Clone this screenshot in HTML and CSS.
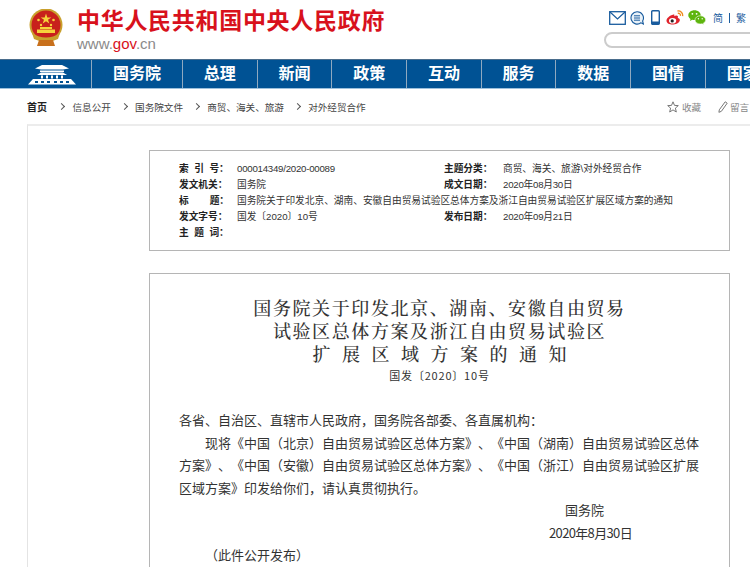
FILE: index.html
```html
<!DOCTYPE html>
<html lang="zh-CN">
<head>
  <meta charset="UTF-8">
  <title>国务院关于印发北京、湖南、安徽自由贸易试验区总体方案及浙江自由贸易试验区扩展区域方案的通知</title>
  <link rel="stylesheet" href="styles.css">
</head>
<body>
<div class="page">

  <header class="top">
    <svg class="emblem" viewBox="0 0 36 38">
      <circle cx="18" cy="16" r="16.5" fill="#c9a02c"/>
      <circle cx="18" cy="16" r="14.5" fill="#c8201c"/>
      <polygon points="18,4.5 19.3,8.4 23.3,8.4 20,10.8 21.3,14.6 18,12.3 14.7,14.6 16,10.8 12.7,8.4 16.7,8.4" fill="#f6d23c"/>
      <circle cx="10.5" cy="11" r="1.3" fill="#f6d23c"/>
      <circle cx="25.5" cy="11" r="1.3" fill="#f6d23c"/>
      <circle cx="13" cy="16" r="1.2" fill="#f6d23c"/>
      <circle cx="23" cy="16" r="1.2" fill="#f6d23c"/>
      <rect x="12" y="18" width="12" height="2" fill="#f6d23c"/>
      <rect x="9" y="20.5" width="18" height="3.5" fill="#f6d23c"/>
      <path d="M4 24 Q18 33 32 24 L30 30 Q18 36 6 30 Z" fill="#c9a02c"/>
      <path d="M11 31 H25 L27 37 H9 Z" fill="#c8701c"/>
    </svg>
    <div class="site-name">
      <div class="site-title">中华人民共和国中央人民政府</div>
      <div class="site-url">www.<span class="url-red">gov</span>.cn</div>
    </div>
    <div class="tools">
      <div class="tool-icons">
        <svg class="icon-mail" viewBox="0 0 17 14"><rect x="0.7" y="0.7" width="15.6" height="12.6" fill="none" stroke="#1a5c9e" stroke-width="1.3"/><path d="M1 1 L8.5 8 L16 1" fill="none" stroke="#1a5c9e" stroke-width="1.2"/></svg>
        <svg class="icon-chat" viewBox="0 0 14 14"><path d="M7 0.7 A6.2 6.2 0 1 0 11 11.8 L13.4 13 L12.6 10 A6.2 6.2 0 0 0 7 0.7 Z" fill="#e8f1f8" stroke="#1a5c9e" stroke-width="1.1"/><path d="M4 4.8 H10 M4 7 H10 M4 9.2 H10" stroke="#1a5c9e" stroke-width="1"/></svg>
        <svg class="icon-phone" viewBox="0 0 9 15"><rect x="0.7" y="0.7" width="7.6" height="13.6" rx="1" fill="#fff" stroke="#1a5c9e" stroke-width="1.4"/><rect x="0.7" y="11.5" width="7.6" height="2.8" fill="#1a5c9e"/></svg>
        <svg class="icon-weibo" viewBox="0 0 18 15"><path d="M7.5 4.5 C3.5 5.5 0.3 8.5 0.5 11 C0.8 13.6 4.2 14.8 7.5 14.5 C11 14.2 14 12.2 13.8 9.8 C13.7 8.6 12.5 8.2 11.8 8 C12.4 6.4 11.6 5.6 10.4 5.6 C9.4 5.6 8.6 6 8.2 6.2 C8.6 4.9 8.4 4.2 7.5 4.5 Z" fill="#e0232c"/><ellipse cx="6.6" cy="10.7" rx="3.6" ry="2.8" fill="#fff"/><circle cx="6.2" cy="10.9" r="1.6" fill="#222"/><path d="M11.5 1 C14.5 0.5 17.2 3 16.6 6.2 M11.8 3.3 C13.4 3 14.8 4.3 14.4 5.9" fill="none" stroke="#f08a1d" stroke-width="1.3"/></svg>
        <svg class="icon-wechat" viewBox="0 0 18 15"><path d="M6.5 0.3 C3 0.3 0.3 2.5 0.3 5.2 C0.3 6.8 1.2 8 2.5 9 L2 11 L4.2 9.8 C5 10 5.7 10.1 6.5 10.1 C10 10.1 12.7 7.9 12.7 5.2 C12.7 2.5 10 0.3 6.5 0.3 Z" fill="#5eb50e"/><path d="M12.3 5.8 C9.4 5.8 7 7.6 7 9.9 C7 12.2 9.4 14 12.3 14 C13 14 13.6 13.9 14.1 13.8 L16 14.8 L15.5 13 C16.8 12.2 17.7 11.1 17.7 9.9 C17.7 7.6 15.2 5.8 12.3 5.8 Z" fill="#5eb50e" stroke="#fff" stroke-width="0.6"/><circle cx="4.4" cy="3.8" r="0.9" fill="#fff"/><circle cx="8.6" cy="3.8" r="0.9" fill="#fff"/><circle cx="10.4" cy="8.8" r="0.7" fill="#fff"/><circle cx="14.2" cy="8.8" r="0.7" fill="#fff"/></svg>
        <span class="lang">简</span>
        <span class="lang-sep"></span>
        <span class="lang">繁</span>
        <span class="lang-sep lang-sep-last"></span>
      </div>
      <div class="search"></div>
    </div>
  </header>

  <nav class="nav">
    <div class="nav-logo">
      <svg viewBox="0 0 50 21">
        <path d="M8 4.5 L15 1 H35 L42 4.5 L36 5.5 H14 Z" fill="#fff"/>
        <rect x="13" y="6.5" width="24" height="1.5" fill="#fff"/>
        <path d="M10 11 L14 8.5 H36 L40 11 Z" fill="#fff"/>
        <path d="M14 11.5 h2 v3 h-2z M19 11.5 h2 v3 h-2z M24 11.5 h2 v3 h-2z M29 11.5 h2 v3 h-2z M34 11.5 h2 v3 h-2z" fill="#fff"/>
        <path d="M6 15 H44 L49 20.5 H1 Z" fill="#fff"/>
        <path d="M8 17 h3 v2 h-3z M14 17 h3 v2 h-3z M20 17 h3 v2 h-3z M27 17 h3 v2 h-3z M33 17 h3 v2 h-3z M39 17 h3 v2 h-3z" fill="#005294"/>
      </svg>
    </div>
    <a class="nav-item nav-first">国务院</a>
    <a class="nav-item">总理</a>
    <a class="nav-item">新闻</a>
    <a class="nav-item">政策</a>
    <a class="nav-item">互动</a>
    <a class="nav-item">服务</a>
    <a class="nav-item">数据</a>
    <a class="nav-item">国情</a>
    <a class="nav-item">国家</a>
  </nav>

  <div class="crumbs">
    <a class="crumb-home">首页</a>
    <span class="crumb-arrow"></span>
    <a>信息公开</a>
    <span class="crumb-arrow"></span>
    <a>国务院文件</a>
    <span class="crumb-arrow"></span>
    <a>商贸、海关、旅游</a>
    <span class="crumb-arrow"></span>
    <a>对外经贸合作</a>
    <div class="crumb-actions">
      <svg class="icon-star" viewBox="0 0 12 12"><polygon points="6,0.8 7.5,4.4 11.3,4.6 8.4,7.1 9.3,11 6,8.9 2.7,11 3.6,7.1 0.7,4.6 4.5,4.4" fill="none" stroke="#777" stroke-width="1"/></svg>
      <span class="action-text">收藏</span>
      <svg class="icon-pen" viewBox="0 0 10 12"><path d="M7.2 0.8 L9.2 2.2 L3.4 10.3 L0.9 11.3 L1.3 8.8 Z" fill="none" stroke="#777" stroke-width="1"/></svg>
      <span class="action-text">留言</span>
    </div>
  </div>

  <main class="card">
    <section class="info">
      <div class="info-row">
        <div class="info-half"><span class="info-label"><span class="gap-sm">索引</span>号：</span><span class="info-value info-num">000014349/2020-00089</span></div>
        <div class="info-half"><span class="info-label">主题分类：</span><span class="info-value">商贸、海关、旅游\对外经贸合作</span></div>
      </div>
      <div class="info-row">
        <div class="info-half"><span class="info-label">发文机关：</span><span class="info-value">国务院</span></div>
        <div class="info-half"><span class="info-label">成文日期：</span><span class="info-value info-num">2020年08月30日</span></div>
      </div>
      <div class="info-row">
        <span class="info-label"><span class="gap-lg">标</span>题：</span><span class="info-value">国务院关于印发北京、湖南、安徽自由贸易试验区总体方案及浙江自由贸易试验区扩展区域方案的通知</span>
      </div>
      <div class="info-row">
        <div class="info-half"><span class="info-label">发文字号：</span><span class="info-value">国发〔2020〕10号</span></div>
        <div class="info-half"><span class="info-label">发布日期：</span><span class="info-value info-num">2020年09月21日</span></div>
      </div>
      <div class="info-row">
        <span class="info-label"><span class="gap-sm">主题</span>词：</span>
      </div>
    </section>

    <article class="doc">
      <h1 class="doc-title">
        <span class="title-line">国务院关于印发北京、湖南、安徽自由贸易</span>
        <span class="title-line">试验区总体方案及浙江自由贸易试验区</span>
        <span class="title-line title-wide">扩展区域方案的通知</span>
      </h1>
      <div class="doc-number">国发〔2020〕10号</div>
      <p class="doc-para">各省、自治区、直辖市人民政府，国务院各部委、各直属机构：</p>
      <p class="doc-para doc-indent">现将《中国（北京）自由贸易试验区总体方案》、《中国（湖南）自由贸易试验区总体方案》、《中国（安徽）自由贸易试验区总体方案》、《中国（浙江）自由贸易试验区扩展区域方案》印发给你们，请认真贯彻执行。</p>
      <p class="doc-para doc-org">国务院</p>
      <p class="doc-para doc-date">2020年8月30日</p>
      <p class="doc-para doc-note">（此件公开发布）</p>
    </article>
  </main>

</div>
</body>
</html>
```
FILE: styles.css
```css
html {
  overflow: hidden;
  height: 573px;
}

body {
  margin: 0;
  height: 573px;
  overflow: hidden;
  background-color: #fff;
  font-family: "Liberation Sans", "Noto Sans CJK SC", sans-serif;
  text-spacing-trim: space-all;
}

.page {
  width: 1000px;
}

/* Header */
.top {
  display: flex;
  height: 59px;
  box-sizing: border-box;
  padding: 9px 0 0 28px;
}

.emblem {
  width: 36px;
  height: 38px;
  margin-right: 13px;
}

.site-name {
  width: 321px;
}

.site-title {
  margin-top: -3px;
  font-size: 23px;
  line-height: 30px;
  font-weight: 700;
  letter-spacing: 0.7px;
  color: #d8111c;
  white-space: nowrap;
}

.site-url {
  font-size: 15px;
  line-height: 15px;
  color: #8a8a8a;
}

.url-red {
  color: #d8111c;
}

.tools {
  margin-left: 206px;
  margin-top: 1px;
}

.tool-icons {
  display: flex;
  align-items: center;
  height: 15px;
  padding-left: 5px;
}

.icon-mail { width: 17px; height: 14px; margin-right: 4px; }
.icon-chat { width: 14px; height: 14px; margin-right: 7px; }
.icon-phone { width: 9px; height: 15px; margin-right: 6px; }
.icon-weibo { width: 18px; height: 15px; margin-right: 4px; }
.icon-wechat { width: 18px; height: 15px; margin-right: 7px; }

.lang {
  font-size: 10px;
  color: #1a5c9e;
}

.lang-sep {
  width: 1px;
  height: 10px;
  margin: 0 6px;
  background-color: #1a5c9e;
}

.lang-sep-last {
  background-color: #f0a040;
}

.search {
  width: 200px;
  height: 12px;
  margin-top: 7px;
  border: 2px solid #ccc;
  border-radius: 9px;
}

/* Nav */
.nav {
  display: flex;
  height: 30px;
  background-color: #005294;
  border-top: 1px solid #4a6d8c;
  border-bottom: 1px solid #9cc0dc;
  box-sizing: border-box;
}

.nav-logo {
  display: flex;
  align-items: center;
  width: 91px;
  box-sizing: border-box;
  padding-left: 27px;
}

.nav-logo svg {
  width: 50px;
  height: 21px;
}

.nav-item {
  width: 74.7px;
  flex: none;
  box-sizing: border-box;
  border-left: 1px solid #8fa9c0;
  font-size: 16px;
  font-weight: 700;
  line-height: 28px;
  text-align: center;
  color: #fff;
}

.nav-first {
  width: 91px;
}

/* Breadcrumb */
.crumbs {
  display: flex;
  align-items: center;
  width: 750px;
  height: 35px;
  box-sizing: border-box;
  padding-left: 27px;
  font-size: 9.6px;
  color: #444;
  white-space: nowrap;
}

.crumb-home {
  margin-right: 1.3px;
  font-size: 10px;
  font-weight: 700;
  color: #222;
}

.crumb-arrow {
  width: 4px;
  height: 4px;
  margin: 0 8.5px 0 10.7px;
  border-top: 1px solid #555;
  border-right: 1px solid #555;
  transform: rotate(45deg);
}

.crumb-actions {
  display: flex;
  align-items: center;
  margin-left: auto;
  color: #888;
}

.icon-star { width: 12px; height: 12px; margin-right: 3px; }
.icon-pen { width: 10px; height: 12px; margin: 0 2px 0 16px; }

.action-text {
  width: 20px;
}

/* Content card */
.card {
  margin-left: 27px;
  width: 946px;
  box-sizing: border-box;
  padding: 24px 0 0 121px;
  border-top: 2px solid #ececec;
  border-left: 1px solid #e4e4e4;
}

.info {
  width: 581px;
  height: 101px;
  box-sizing: border-box;
  padding: 10px 0 0 29px;
  border: 1px solid #b5b5b5;
  font-size: 9.7px;
  color: #333;
}

.info-row {
  display: flex;
  height: 16px;
  line-height: 16px;
}

.info-half {
  display: flex;
  width: 265px;
}

.info-half + .info-half .info-label {
  width: 59px;
}

.info-label {
  width: 58px;
  flex: none;
  font-weight: 700;
  color: #222;
}

.info-value {
  white-space: nowrap;
}

.info-num {
  letter-spacing: -0.25px;
}

.gap-sm {
  letter-spacing: 5.5px;
}

.gap-lg {
  letter-spacing: 21px;
}

/* Document */
.doc {
  width: 581px;
  margin-top: 22px;
  box-sizing: border-box;
  padding: 22px 29px 0;
  border: 1px solid #b5b5b5;
  border-bottom: none;
  font-family: "Noto Sans CJK SC", sans-serif;
  font-size: 13px;
  color: #333;
}

.doc-title {
  margin: 0;
  font-family: "Noto Serif CJK SC", "Noto Sans CJK SC", serif;
  font-size: 18px;
  font-weight: 500;
  line-height: 23px;
  letter-spacing: 1.6px;
  text-align: center;
}

.title-line {
  display: block;
}

.title-wide {
  letter-spacing: 11.5px;
  text-indent: 11.5px;
}

.doc-number {
  margin-top: 1px;
  font-size: 11px;
  line-height: 19px;
  letter-spacing: 0.8px;
  text-align: center;
}

.doc-para {
  margin: 0;
  line-height: 22.5px;
  width: 523px;
}

.doc-number + .doc-para {
  margin-top: 24px;
}

.doc-indent {
  text-indent: 26px;
}

.doc-org {
  padding-left: 386px;
}

.doc-date {
  padding-left: 370px;
  letter-spacing: -0.65px;
}

.doc-note {
  padding-left: 26px;
}
```
